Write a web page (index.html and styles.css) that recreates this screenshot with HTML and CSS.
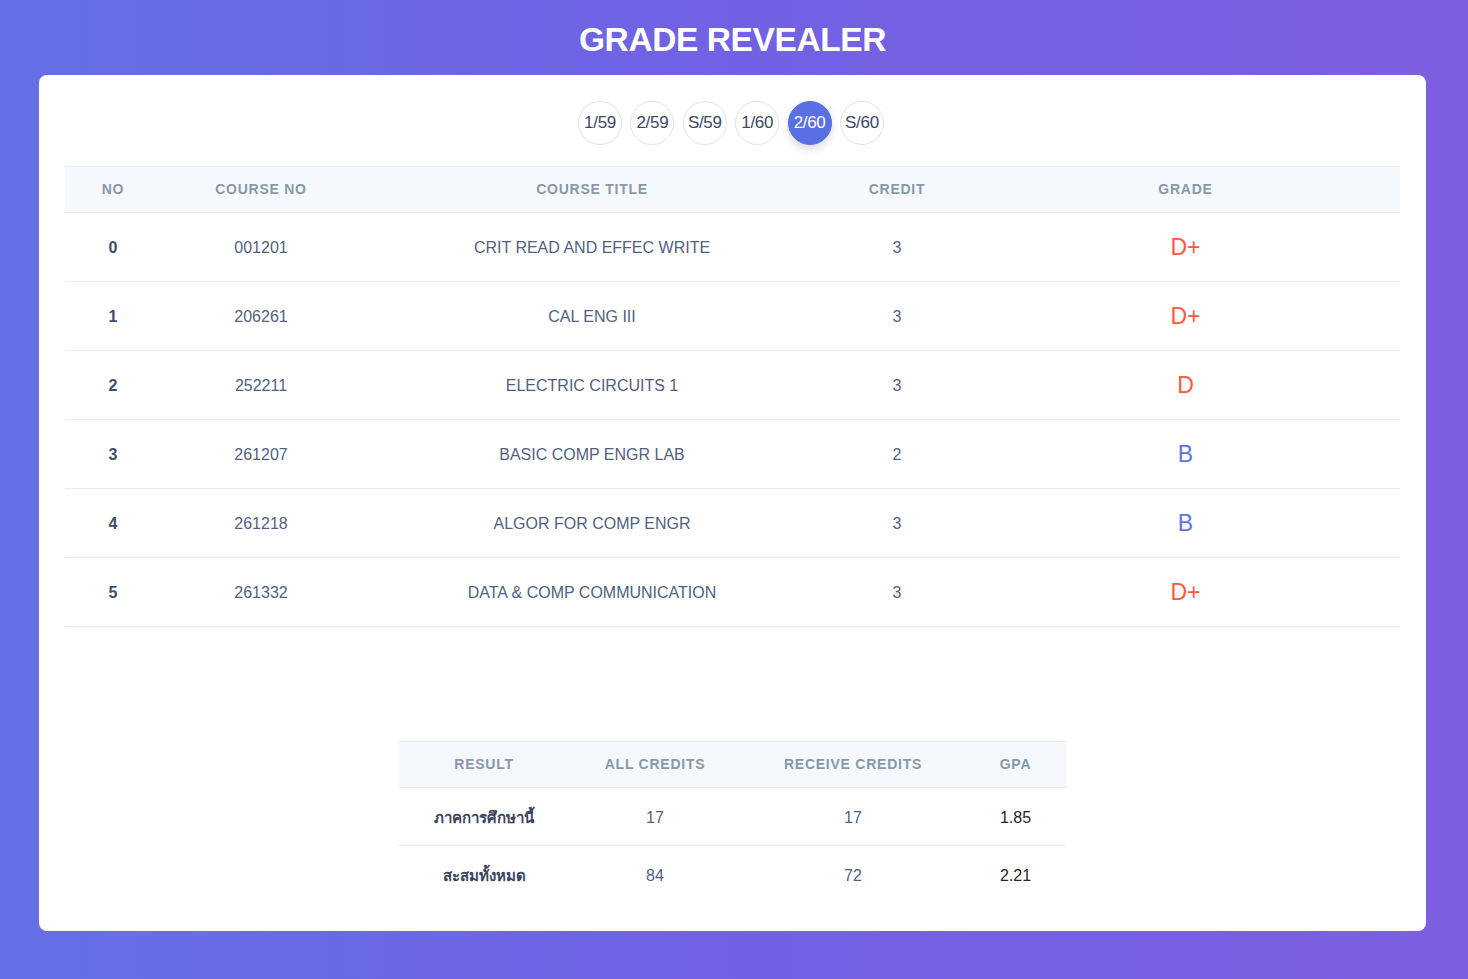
FILE: index.html
```html
<!DOCTYPE html>
<html lang="en">
<head>
<meta charset="utf-8">
<title>Grade Revealer</title>
<link rel="stylesheet" href="styles.css">
</head>
<body>
<div class="page">
  <h1 class="title">GRADE REVEALER</h1>
  <main class="card">
    <nav class="terms">
      <span class="term">1/59</span>
      <span class="term">2/59</span>
      <span class="term">S/59</span>
      <span class="term">1/60</span>
      <span class="term active">2/60</span>
      <span class="term">S/60</span>
    </nav>
    <table class="grades">
      <colgroup>
        <col class="c-no"><col class="c-code"><col class="c-title"><col class="c-credit"><col class="c-grade">
      </colgroup>
      <thead>
        <tr><th>NO</th><th>COURSE NO</th><th>COURSE TITLE</th><th>CREDIT</th><th>GRADE</th></tr>
      </thead>
      <tbody>
        <tr><td class="no">0</td><td>001201</td><td>CRIT READ AND EFFEC WRITE</td><td>3</td><td class="grade bad">D+</td></tr>
        <tr><td class="no">1</td><td>206261</td><td>CAL ENG III</td><td>3</td><td class="grade bad">D+</td></tr>
        <tr><td class="no">2</td><td>252211</td><td>ELECTRIC CIRCUITS 1</td><td>3</td><td class="grade bad">D</td></tr>
        <tr><td class="no">3</td><td>261207</td><td>BASIC COMP ENGR LAB</td><td>2</td><td class="grade good">B</td></tr>
        <tr><td class="no">4</td><td>261218</td><td>ALGOR FOR COMP ENGR</td><td>3</td><td class="grade good">B</td></tr>
        <tr><td class="no">5</td><td>261332</td><td>DATA &amp; COMP COMMUNICATION</td><td>3</td><td class="grade bad">D+</td></tr>
      </tbody>
    </table>
    <table class="summary">
      <colgroup>
        <col class="s-result"><col class="s-all"><col class="s-recv"><col class="s-gpa">
      </colgroup>
      <thead>
        <tr><th>RESULT</th><th>ALL CREDITS</th><th>RECEIVE CREDITS</th><th>GPA</th></tr>
      </thead>
      <tbody>
        <tr><td class="label">ภาคการศึกษานี้</td><td>17</td><td>17</td><td class="gpa">1.85</td></tr>
        <tr><td class="label">สะสมทั้งหมด</td><td>84</td><td>72</td><td class="gpa">2.21</td></tr>
      </tbody>
    </table>
  </main>
</div>
</body>
</html>
```

FILE: styles.css
```css
html, body {
  margin: 0;
  padding: 0;
}
body {
  min-height: 979px;
  background: linear-gradient(90deg, #6570e6 0%, #7162e3 50%, #7e5ee1 100%);
  font-family: "Liberation Sans", Arial, sans-serif;
}
.page {
  padding: 0 42px 48px 39px;
}
.title {
  margin: 0;
  height: 75px;
  line-height: 80px;
  text-align: center;
  color: #ffffff;
  font-weight: 700;
  font-size: 33.5px;
  letter-spacing: -0.4px;
}
.card {
  background: #ffffff;
  border-radius: 8px;
  padding: 26px 26px 27px;
  display: flex;
  flex-direction: column;
  align-items: center;
}
.terms {
  display: flex;
  gap: 8.4px;
  margin-bottom: 21px;
  margin-right: 3px;
}
.term {
  width: 44px;
  height: 44px;
  box-sizing: border-box;
  border: 1px solid #e3e3e3;
  border-radius: 50%;
  display: flex;
  align-items: center;
  justify-content: center;
  font-size: 17px;
  color: #3d4866;
  letter-spacing: -0.3px;
}
.term.active {
  background: #5a6fe2;
  border-color: #5a6fe2;
  color: #ffffff;
  box-shadow: 0 4px 8px rgba(50, 50, 93, 0.18);
}
table {
  border-collapse: collapse;
  text-align: center;
}
th {
  background: #f6f9fc;
  color: #8898aa;
  font-size: 14px;
  font-weight: 700;
  letter-spacing: 0.75px;
  height: 46px;
  padding: 0 0 2px;
  border-top: 1px solid #e9ecef;
  border-bottom: 1px solid #e9ecef;
  box-sizing: border-box;
}
td {
  padding: 1px 0 0;
  border-bottom: 1px solid #e9ecef;
  color: #525f7f;
  font-size: 16px;
  box-sizing: border-box;
}
.grades {
  width: 100%;
  table-layout: fixed;
}
.grades td {
  height: 69px;
}
.c-no { width: 96px; }
.c-code { width: 200px; }
.c-title { width: 462px; }
.c-credit { width: 148px; }
.c-grade { width: auto; }
.grades td.no {
  font-weight: 700;
  color: #3f4d6a;
}
.grade {
  font-size: 23px;
}
.grade.bad { color: #fb5a3c; }
.grade.good { color: #5e72e4; }
.summary {
  margin-top: 114px;
  width: 667px;
  table-layout: fixed;
}
.summary td {
  height: 58px;
  padding-top: 3px;
}
.s-result { width: 170px; }
.s-all { width: 172px; }
.s-recv { width: 224px; }
.s-gpa { width: 101px; }
.summary tr:last-child td {
  border-bottom: none;
}
.summary td.label {
  font-weight: 700;
  color: #3c4460;
  font-size: 15px;
}
.summary td.gpa {
  color: #212529;
}
```
